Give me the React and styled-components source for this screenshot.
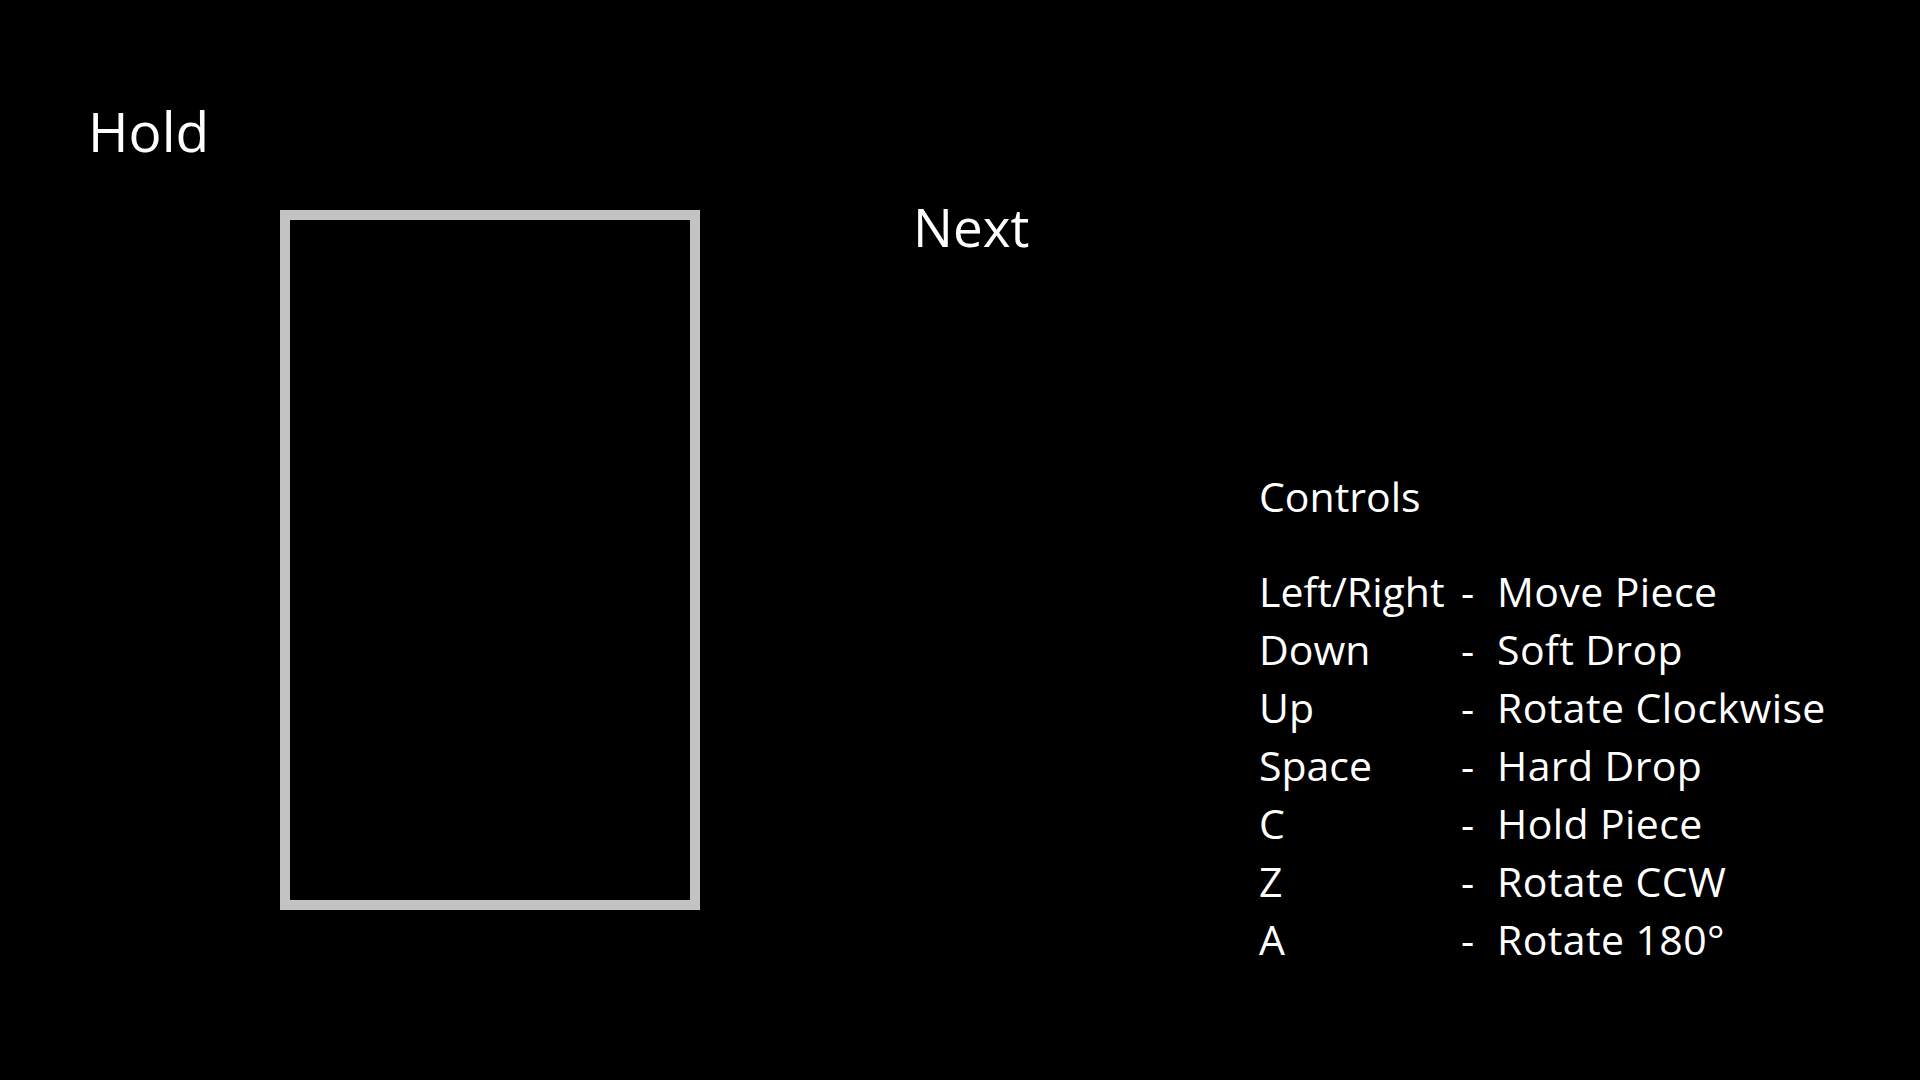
import React from 'react';
import styled, { createGlobalStyle } from 'styled-components';

const GlobalStyle = createGlobalStyle`
  html, body {
    margin: 0;
    padding: 0;
    background: #000;
  }
  body {
    width: 1920px;
    height: 1080px;
    overflow: hidden;
  }
`;

const Screen = styled.main`
  width: 1920px;
  height: 1080px;
  background: #000;
  color: #fff;
  display: flex;
  align-items: flex-start;
  font-family: "Open Sans", "Noto Sans", sans-serif;
`;

const HoldSection = styled.section`
  margin-left: 88px;
  padding-top: 103px;
  display: flex;
  flex-direction: column;
`;

const PanelTitle = styled.h2`
  margin: 0;
  font-weight: 400;
  font-size: ${(p) => p.$size}px;
  line-height: 1;
  color: #fff;
`;

const HoldBox = styled.div`
  box-sizing: border-box;
  width: 420px;
  height: 700px;
  margin-top: 52px;
  margin-left: 192px;
  border: 10px solid #c3c3c3;
`;

const NextSection = styled.section`
  margin-left: 213px;
  width: 346px;
  padding-top: 200px;
`;

const ControlsSection = styled.section`
  padding-top: 467px;
  font-size: 41px;
  line-height: 58px;
`;

const ControlsTitle = styled.div`
  margin-bottom: 37px;
`;

const ControlList = styled.div`
  display: grid;
  grid-template-columns: 202px 36px auto;
`;

const Key = styled.span`
  white-space: nowrap;
`;

const Dash = styled.span``;

const Action = styled.span`
  white-space: nowrap;
  letter-spacing: 0.4px;
`;

const controls = [
  ['Left/Right', 'Move Piece'],
  ['Down', 'Soft Drop'],
  ['Up', 'Rotate Clockwise'],
  ['Space', 'Hard Drop'],
  ['C', 'Hold Piece'],
  ['Z', 'Rotate CCW'],
  ['A', 'Rotate 180°'],
];

export default function App() {
  return (
    <>
      <GlobalStyle />
      <Screen>
        <HoldSection>
          <PanelTitle $size={55}>Hold</PanelTitle>
          <HoldBox />
        </HoldSection>
        <NextSection>
          <PanelTitle $size={53}>Next</PanelTitle>
        </NextSection>
        <ControlsSection>
          <ControlsTitle>Controls</ControlsTitle>
          <ControlList>
            {controls.map(([key, action]) => (
              <React.Fragment key={key}>
                <Key>{key}</Key>
                <Dash>-</Dash>
                <Action>{action}</Action>
              </React.Fragment>
            ))}
          </ControlList>
        </ControlsSection>
      </Screen>
    </>
  );
}
